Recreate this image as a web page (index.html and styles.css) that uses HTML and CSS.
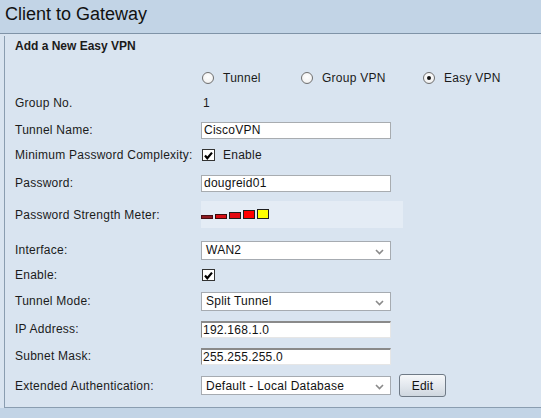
FILE: index.html
```html
<!DOCTYPE html>
<html>
<head>
<meta charset="utf-8">
<link rel="stylesheet" href="styles.css">
</head>
<body>
<div class="page">
  <h1 class="title">Client to Gateway</h1>
  <div class="content">
    <div class="panel">
      <div class="row heading">Add a New Easy VPN</div>
      <div class="row gap-wide">
        <span class="label"></span>
        <div class="radios">
          <label class="opt opt-a"><span class="radio"></span>Tunnel</label>
          <label class="opt opt-b"><span class="radio"></span>Group VPN</label>
          <label class="opt"><span class="radio checked"></span>Easy VPN</label>
        </div>
      </div>
      <div class="row gap-tight">
        <span class="label">Group No.</span>
        <span class="value">1</span>
      </div>
      <div class="row">
        <span class="label">Tunnel Name:</span>
        <input class="text" type="text" value="CiscoVPN">
      </div>
      <div class="row gap-tight">
        <span class="label">Minimum Password Complexity:</span>
        <span class="check"><svg width="11" height="11" viewBox="0 0 11 11"><path d="M2 5.5 L4.3 8.2 L9 2.6" fill="none" stroke="#000" stroke-width="2.2"/></svg></span>
        <span class="check-text">Enable</span>
      </div>
      <div class="row gap-loose">
        <span class="label">Password:</span>
        <input class="text" type="text" value="dougreid01">
      </div>
      <div class="row gap-loose meter-row">
        <span class="label">Password Strength Meter:</span>
        <div class="meter">
          <span class="bar b1"></span>
          <span class="bar b2"></span>
          <span class="bar b3"></span>
          <span class="bar b4"></span>
          <span class="bar b5"></span>
        </div>
      </div>
      <div class="row gap-wide">
        <span class="label">Interface:</span>
        <span class="select"><span class="select-text">WAN2</span><svg class="chev" width="9" height="6" viewBox="0 0 9 6"><path d="M1 1 L4.5 4.5 L8 1" fill="none" stroke="#8a8a8a" stroke-width="1.6"/></svg></span>
      </div>
      <div class="row gap-tight">
        <span class="label">Enable:</span>
        <span class="check"><svg width="11" height="11" viewBox="0 0 11 11"><path d="M2 5.5 L4.3 8.2 L9 2.6" fill="none" stroke="#000" stroke-width="2.2"/></svg></span>
      </div>
      <div class="row gap-mid">
        <span class="label">Tunnel Mode:</span>
        <span class="select"><span class="select-text">Split Tunnel</span><svg class="chev" width="9" height="6" viewBox="0 0 9 6"><path d="M1 1 L4.5 4.5 L8 1" fill="none" stroke="#8a8a8a" stroke-width="1.6"/></svg></span>
      </div>
      <div class="row gap-loose">
        <span class="label">IP Address:</span>
        <input class="text inset" type="text" value="192.168.1.0">
      </div>
      <div class="row">
        <span class="label">Subnet Mask:</span>
        <input class="text inset" type="text" value="255.255.255.0">
      </div>
      <div class="row gap-loose last">
        <span class="label">Extended Authentication:</span>
        <span class="select"><span class="select-text">Default - Local Database</span><svg class="chev" width="9" height="6" viewBox="0 0 9 6"><path d="M1 1 L4.5 4.5 L8 1" fill="none" stroke="#8a8a8a" stroke-width="1.6"/></svg></span>
        <button class="btn" type="button">Edit</button>
      </div>
    </div>
  </div>
</div>
</body>
</html>
```
FILE: styles.css
```css
html, body {
  margin: 0;
  padding: 0;
}
body {
  background: #c2d4e6;
  font-family: "Liberation Sans", Arial, sans-serif;
  font-size: 12px;
  color: #1b1b1b;
  letter-spacing: 0.25px;
}
.title {
  margin: 0;
  padding: 4px 0 0 5px;
  height: 29px;
  font-size: 18px;
  line-height: 20px;
  font-weight: normal;
  letter-spacing: 0;
  color: #111;
}
.content {
  background: #d9e4f0;
  border-top: 1px solid #7f93a7;
  padding-left: 4px;
}
.panel {
  border-left: 1px solid #8a9db0;
  border-bottom: 1px solid #8a9db0;
  padding: 0 0 10px 10px;
}
.row {
  display: flex;
  align-items: center;
  height: 20px;
  margin-top: 7px;
}
.heading {
  margin-top: 2px;
  font-weight: bold;
  letter-spacing: 0;
}
.gap-tight { margin-top: 5px; }
.gap-mid { margin-top: 6px; }
.gap-loose { margin-top: 8px; }
.gap-wide { margin-top: 12px; }
.label {
  width: 186px;
  flex: none;
}
.value {
  padding-left: 2px;
}
.radios {
  display: flex;
  align-items: center;
  padding-left: 1px;
  flex: none;
  white-space: nowrap;
}
.opt {
  display: flex;
  align-items: center;
  flex: none;
}
.opt-a { width: 99px; }
.opt-b { width: 122px; }
.radio {
  width: 10px;
  height: 10px;
  border: 1px solid #707070;
  border-radius: 50%;
  background: radial-gradient(circle at 50% 40%, #ffffff 0%, #f4f4f4 60%, #dcdcdc 100%);
  margin-right: 9px;
  margin-top: -1px;
  display: flex;
  align-items: center;
  justify-content: center;
  flex: none;
}
.radio.checked::after {
  content: "";
  width: 4px;
  height: 4px;
  border-radius: 50%;
  background: #111;
}
.text {
  box-sizing: border-box;
  width: 190px;
  height: 17px;
  border: 1px solid #a8acb0;
  background: #fff;
  padding: 0 2px;
  margin: 0;
  font-family: "Liberation Sans", Arial, sans-serif;
  font-size: 12px;
  letter-spacing: 0.25px;
  color: #111;
  outline: none;
}
.text.inset {
  border-style: solid;
  border-width: 2px 1px 1px 1px;
  border-color: #8a8a8a #e6e6e6 #e6e6e6 #8a8a8a;
  padding: 0 1px;
}
.check {
  box-sizing: border-box;
  width: 13px;
  height: 12px;
  border: 1px solid #333;
  background: #fff;
  margin-left: 1px;
  display: flex;
  align-items: center;
  justify-content: center;
}
.check svg { display: block; }
.check-text {
  margin-left: 8px;
}
.meter-row {
  height: 27px;
}
.meter {
  box-sizing: border-box;
  width: 202px;
  height: 27px;
  background: #e4ecf5;
  display: flex;
  align-items: flex-end;
  padding-bottom: 9px;
}
.bar {
  box-sizing: border-box;
  width: 12px;
  margin-right: 2px;
  border: 1px solid #1e1e1e;
}
.b1 { height: 4px; background: #8e1b22; border-color: #4a1015; }
.b2 { height: 5px; background: #d60d14; border-color: #3a0a0a; }
.b3 { height: 7px; background: #e30b12; }
.b4 { height: 9px; background: #ff0000; }
.b5 { height: 10px; background: #ffff00; }
.select {
  position: relative;
  box-sizing: border-box;
  width: 190px;
  height: 19px;
  border: 1px solid #a6abb1;
  background: #fff;
  display: flex;
  align-items: center;
  padding-left: 4px;
  color: #111;
}
.chev {
  position: absolute;
  right: 6px;
  top: 7px;
}
.last {
  height: 23px;
}
.btn {
  box-sizing: border-box;
  margin-left: 8px;
  width: 47px;
  height: 23px;
  border: 1px solid #6f7a86;
  border-radius: 3px;
  background: linear-gradient(#f6f8fa, #e3e8ee 50%, #cfd7df);
  font-family: "Liberation Sans", Arial, sans-serif;
  font-size: 12px;
  letter-spacing: 0.25px;
  color: #111;
  padding: 0;
}
```
